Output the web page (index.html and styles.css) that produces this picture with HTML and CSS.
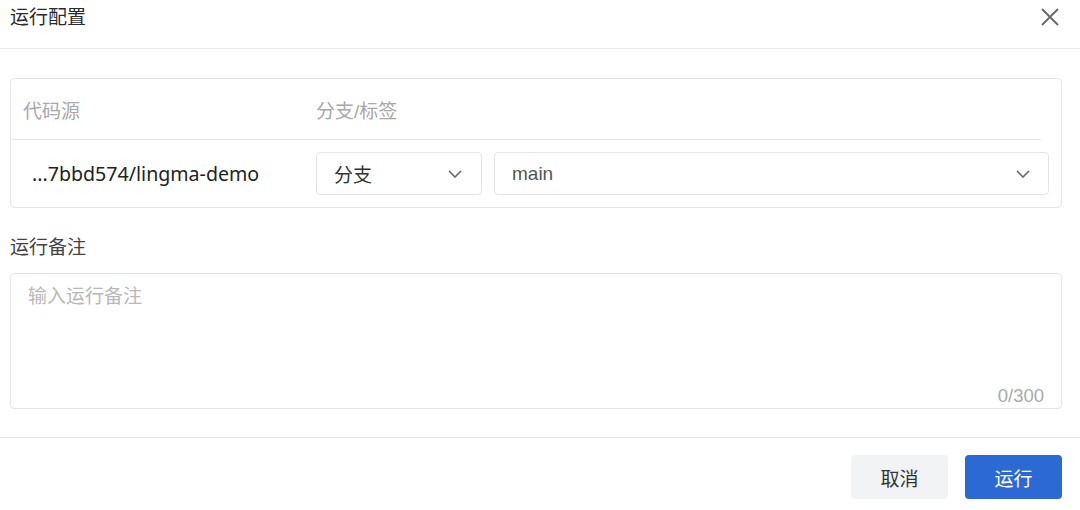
FILE: index.html
```html
<!DOCTYPE html>
<html lang="zh-CN">
<head>
<meta charset="utf-8">
<title>运行配置</title>
<link rel="stylesheet" href="styles.css">
</head>
<body>
<div class="dialog">
  <div class="dlg-header">
    <div class="dlg-title">运行配置</div>
    <svg class="close" width="20" height="20" viewBox="0 0 20 20"><path d="M2 2 L18 18 M18 2 L2 18" stroke="#6b6b6b" stroke-width="2" fill="none"/></svg>
  </div>
  <div class="dlg-body">
    <div class="card">
      <div class="thead">
        <div class="col1">代码源</div>
        <div class="col2">分支/标签</div>
      </div>
      <div class="trow">
        <div class="col1 repo">...7bbd574/lingma-demo</div>
        <div class="col2 selects">
          <div class="select sel-type">
            <span class="sel-val">分支</span>
            <svg class="chev" width="14" height="8" viewBox="0 0 14 8"><path d="M1 1 L7 7 L13 1" stroke="#666" stroke-width="1.6" fill="none"/></svg>
          </div>
          <div class="select sel-branch">
            <span class="sel-val muted">main</span>
            <svg class="chev" width="14" height="8" viewBox="0 0 14 8"><path d="M1 1 L7 7 L13 1" stroke="#666" stroke-width="1.6" fill="none"/></svg>
          </div>
        </div>
      </div>
    </div>
    <div class="label">运行备注</div>
    <div class="textarea-wrap">
      <textarea class="note" placeholder="输入运行备注"></textarea>
      <span class="counter">0/300</span>
    </div>
  </div>
  <div class="dlg-footer">
    <button class="btn btn-cancel">取消</button>
    <button class="btn btn-primary">运行</button>
  </div>
</div>
</body>
</html>
```
FILE: styles.css
```css
* { box-sizing: border-box; }
body {
  margin: 0;
  background: #fff;
  font-family: "Liberation Sans", "Noto Sans CJK SC", sans-serif;
  color: #333;
}
.dialog { width: 1080px; }
.dlg-header {
  height: 49px;
  padding: 0 20px 12px 10px;
  border-bottom: 1px solid #e8e8ea;
  display: flex;
  align-items: center;
  justify-content: space-between;
}
.dlg-title { font-size: 19px; color: #2b2b2b; line-height: 26px; }
.close { display: block; margin-top: -3px; }
.dlg-body { padding: 29px 18px 0 10px; }
.card {
  border: 1px solid #e5e6eb;
  border-radius: 4px;
}
.thead {
  height: 61px;
  margin-right: 20px;
  padding-left: 12px;
  border-bottom: 1px solid #e8e8ea;
  display: flex;
  align-items: center;
  font-size: 19px;
  color: #a8a8a8;
}
.col1 { width: 293px; flex: none; }
.col2 { flex: 1; }
.trow {
  display: flex;
  align-items: center;
  padding: 12px 12px 12px 12px;
}
.repo {
  padding-left: 9px;
  font-family: "Noto Sans", "Noto Sans CJK SC", sans-serif;
  font-weight: 400;
  font-size: 19.6px;
  color: #222;
}
.selects { display: flex; gap: 12px; }
.select {
  height: 43px;
  border: 1px solid #e3e5ea;
  border-radius: 4px;
  display: flex;
  align-items: center;
  justify-content: space-between;
  padding: 0 19px 0 17px;
  font-size: 19px;
  color: #333;
}
.sel-type { width: 166px; flex: none; }
.sel-branch { flex: 1; padding-right: 18px; }
.muted { color: #555; }
.chev { display: block; }
.label {
  margin-top: 27px;
  line-height: 26px;
  font-size: 19px;
  color: #444;
}
.textarea-wrap {
  position: relative;
  margin-top: 12px;
}
.note {
  display: block;
  width: 100%;
  height: 136px;
  border: 1px solid #e5e6eb;
  border-radius: 4px;
  padding: 10px 16px 0 17px;
  resize: none;
  outline: none;
  font-family: "Liberation Sans", "Noto Sans CJK SC", sans-serif;
  font-size: 19px;
  line-height: 26px;
  color: #333;
}
.note::placeholder { color: #b8b8b8; }
.counter {
  position: absolute;
  right: 18px;
  bottom: 3px;
  line-height: 20px;
  font-size: 18.5px;
  color: #aaa;
}
.dlg-footer {
  margin-top: 28px;
  border-top: 1px solid #e8e8ea;
  padding: 17px 18px 0 0;
  display: flex;
  justify-content: flex-end;
  gap: 17px;
}
.btn {
  width: 97px;
  height: 44px;
  border: none;
  border-radius: 4px;
  font-family: "Liberation Sans", "Noto Sans CJK SC", sans-serif;
  font-size: 19px;
}
.btn-cancel { background: #f2f3f5; color: #333; }
.btn-primary { background: #2d69d4; color: #fff; }
```
